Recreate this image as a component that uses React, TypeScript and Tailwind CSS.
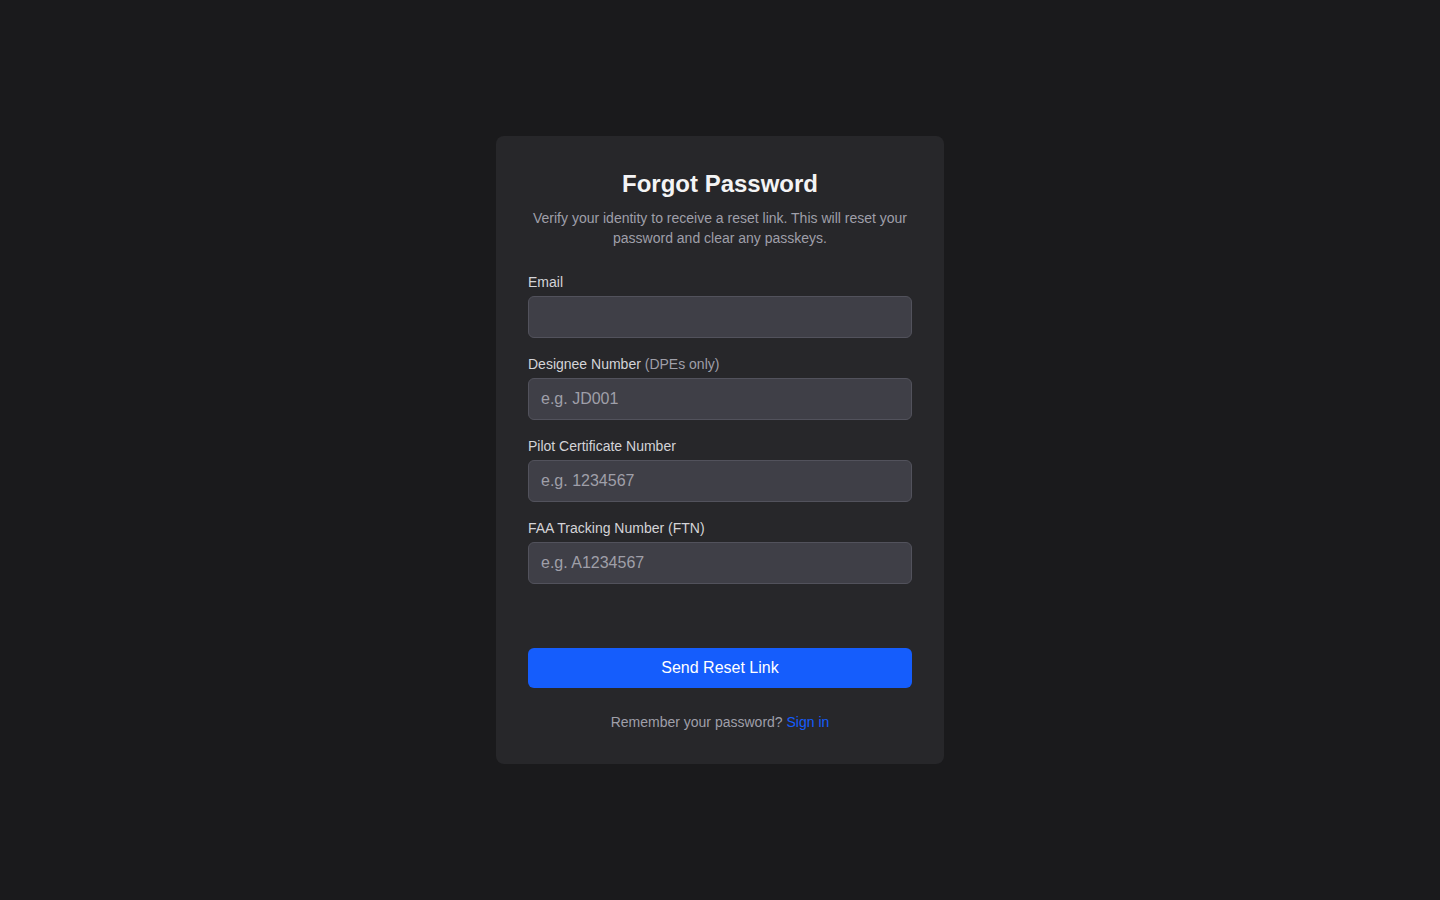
import { useState } from 'react'

interface FieldProps {
  id: string
  label: string
  hint?: string
  type?: string
  placeholder?: string
}

function Field({ id, label, hint, type = 'text', placeholder }: FieldProps) {
  const [value, setValue] = useState('')
  return (
    <div>
      <label htmlFor={id} className="block mb-1 text-sm leading-5 text-zinc-300">
        {label}
        {hint && <span className="text-zinc-400"> {hint}</span>}
      </label>
      <input
        id={id}
        type={type}
        value={value}
        onChange={(e) => setValue(e.target.value)}
        placeholder={placeholder}
        className="block w-full px-3 py-2 text-base leading-6 text-zinc-100 bg-zinc-700 border border-zinc-600 rounded-md placeholder:text-zinc-400 focus:outline-none focus:border-blue-500"
      />
    </div>
  )
}

export default function App() {
  return (
    <div
      className="min-h-screen flex items-center justify-center bg-[#1a1a1c]"
      style={{ fontFamily: "'Liberation Sans', Arial, sans-serif" }}
    >
      <div className="w-full max-w-md p-8 bg-zinc-800 rounded-lg">
        <h1 className="text-2xl leading-8 font-bold text-center text-zinc-100">Forgot Password</h1>
        <p className="mt-2 text-sm leading-5 text-center text-zinc-400">
          Verify your identity to receive a reset link. This will reset your password and clear any passkeys.
        </p>

        <form className="mt-6" onSubmit={(e) => e.preventDefault()}>
          <div className="flex flex-col gap-4">
            <Field id="email" label="Email" type="email" />
            <Field id="designee" label="Designee Number" hint="(DPEs only)" placeholder="e.g. JD001" />
            <Field id="pilot" label="Pilot Certificate Number" placeholder="e.g. 1234567" />
            <Field id="ftn" label="FAA Tracking Number (FTN)" placeholder="e.g. A1234567" />
          </div>

          <button
            type="submit"
            className="mt-16 w-full py-2 text-base leading-6 text-white bg-blue-600 rounded-md cursor-pointer hover:bg-blue-700"
          >
            Send Reset Link
          </button>
        </form>

        <p className="mt-6 text-sm leading-5 text-center text-zinc-400">
          Remember your password?{' '}
          <a href="#" className="text-blue-600 hover:underline">
            Sign in
          </a>
        </p>
      </div>
    </div>
  )
}
